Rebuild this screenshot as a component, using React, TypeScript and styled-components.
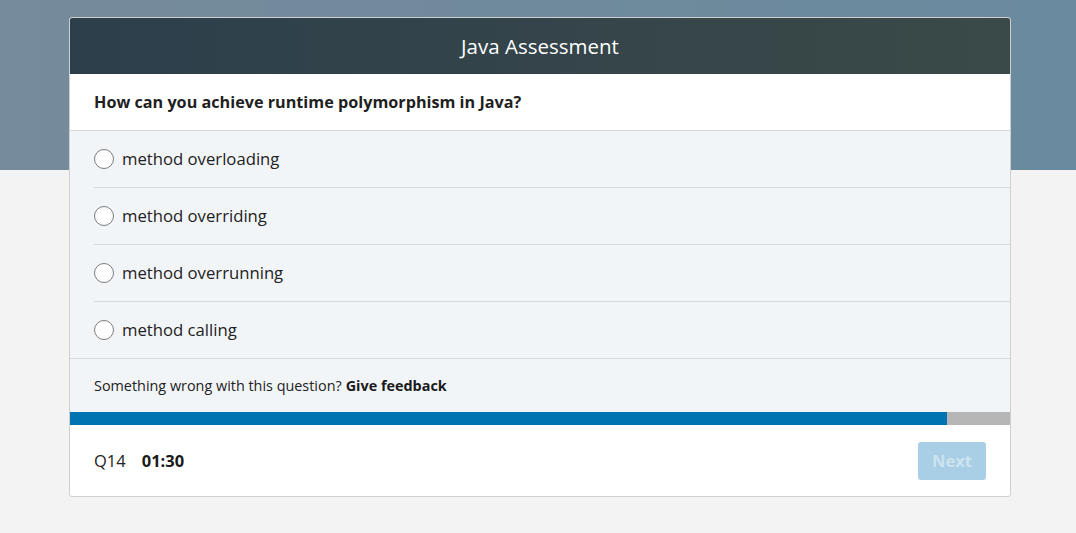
import React from "react";
import styled, { createGlobalStyle } from "styled-components";

const Global = createGlobalStyle`
  html, body { margin: 0; padding: 0; }
  body {
    background: #f3f3f3;
    font-family: "Segoe UI", "Open Sans", "Noto Sans", sans-serif;
    color: #222;
  }
`;

const Page = styled.div`
  min-height: 533px;
  background: #f3f3f3;
`;

const Banner = styled.div`
  height: 170px;
  background: linear-gradient(90deg, #768b9b 0%, #6f8a9c 50%, #6a8a9f 100%);
`;

const Wrap = styled.div`
  margin-top: -153px;
  padding-left: 69px;
`;

const Card = styled.div`
  width: 940px;
  border: 1px solid #cfcfcf;
  border-radius: 3px;
  overflow: hidden;
  background: #fff;
`;

const Header = styled.div`
  height: 56px;
  display: flex;
  align-items: center;
  justify-content: center;
  background: linear-gradient(90deg, #2c3f4b 0%, #34444a 50%, #3a4a48 100%);
  color: #fff;
  font-size: 20.5px;
`;

const Question = styled.div`
  height: 56px;
  display: flex;
  align-items: center;
  padding: 0 24px;
  font-size: 16.2px;
  font-weight: 700;
  color: #1f1f1f;
  border-bottom: 1px solid #d9d9d9;
`;

const Options = styled.div`
  background: #f2f5f8;
  padding-left: 24px;
`;

const Option = styled.label`
  display: flex;
  align-items: center;
  gap: 8px;
  border-bottom: 1px solid #d6d8db;
  font-size: 16.7px;
  color: #222;
  padding-bottom: 1px;
  box-sizing: border-box;
  height: 57px;
  &:last-child { border-bottom: none; height: 56px; }
`;

const Radio = styled.span`
  width: 18px;
  height: 18px;
  border: 1px solid #7a7a7a;
  border-radius: 50%;
  background: #fff;
  flex: none;
`;

const Feedback = styled.div`
  height: 53px;
  display: flex;
  align-items: center;
  padding: 0 24px;
  background: #f2f5f8;
  border-top: 1px solid #d6d8db;
  font-size: 14.4px;
  color: #222;
  b { margin-left: 4px; color: #1a1a1a; }
`;

const Progress = styled.div`
  height: 13px;
  background: #b6b6b6;
`;

const Fill = styled.div`
  height: 100%;
  background: #0073b1;
`;

const Footer = styled.div`
  height: 71px;
  display: flex;
  align-items: center;
  padding: 0 24px 0 24px;
  box-sizing: border-box;
  font-size: 16.5px;
`;

const Num = styled.span`
  color: #222;
`;

const Timer = styled.span`
  margin-left: 16px;
  font-weight: 700;
  color: #1a1a1a;
`;

const Next = styled.button`
  margin-left: auto;
  width: 68px;
  height: 38px;
  border: none;
  border-radius: 3px;
  background: #a8cfe6;
  color: #cde3ef;
  font-family: inherit;
  font-size: 16.5px;
  font-weight: 700;
`;

const options = [
  "method overloading",
  "method overriding",
  "method overrunning",
  "method calling",
];

export default function App() {
  return (
    <Page>
      <Global />
      <Banner />
      <Wrap>
        <Card>
          <Header>Java Assessment</Header>
          <Question>How can you achieve runtime polymorphism in Java?</Question>
          <Options>
            {options.map((o) => (
              <Option key={o}>
                <Radio />
                {o}
              </Option>
            ))}
          </Options>
          <Feedback>
            Something wrong with this question? <b>Give feedback</b>
          </Feedback>
          <Progress>
            <Fill style={{ width: `${(877 / 940) * 100}%` }} />
          </Progress>
          <Footer>
            <Num>Q14</Num>
            <Timer>01:30</Timer>
            <Next disabled>Next</Next>
          </Footer>
        </Card>
      </Wrap>
    </Page>
  );
}
